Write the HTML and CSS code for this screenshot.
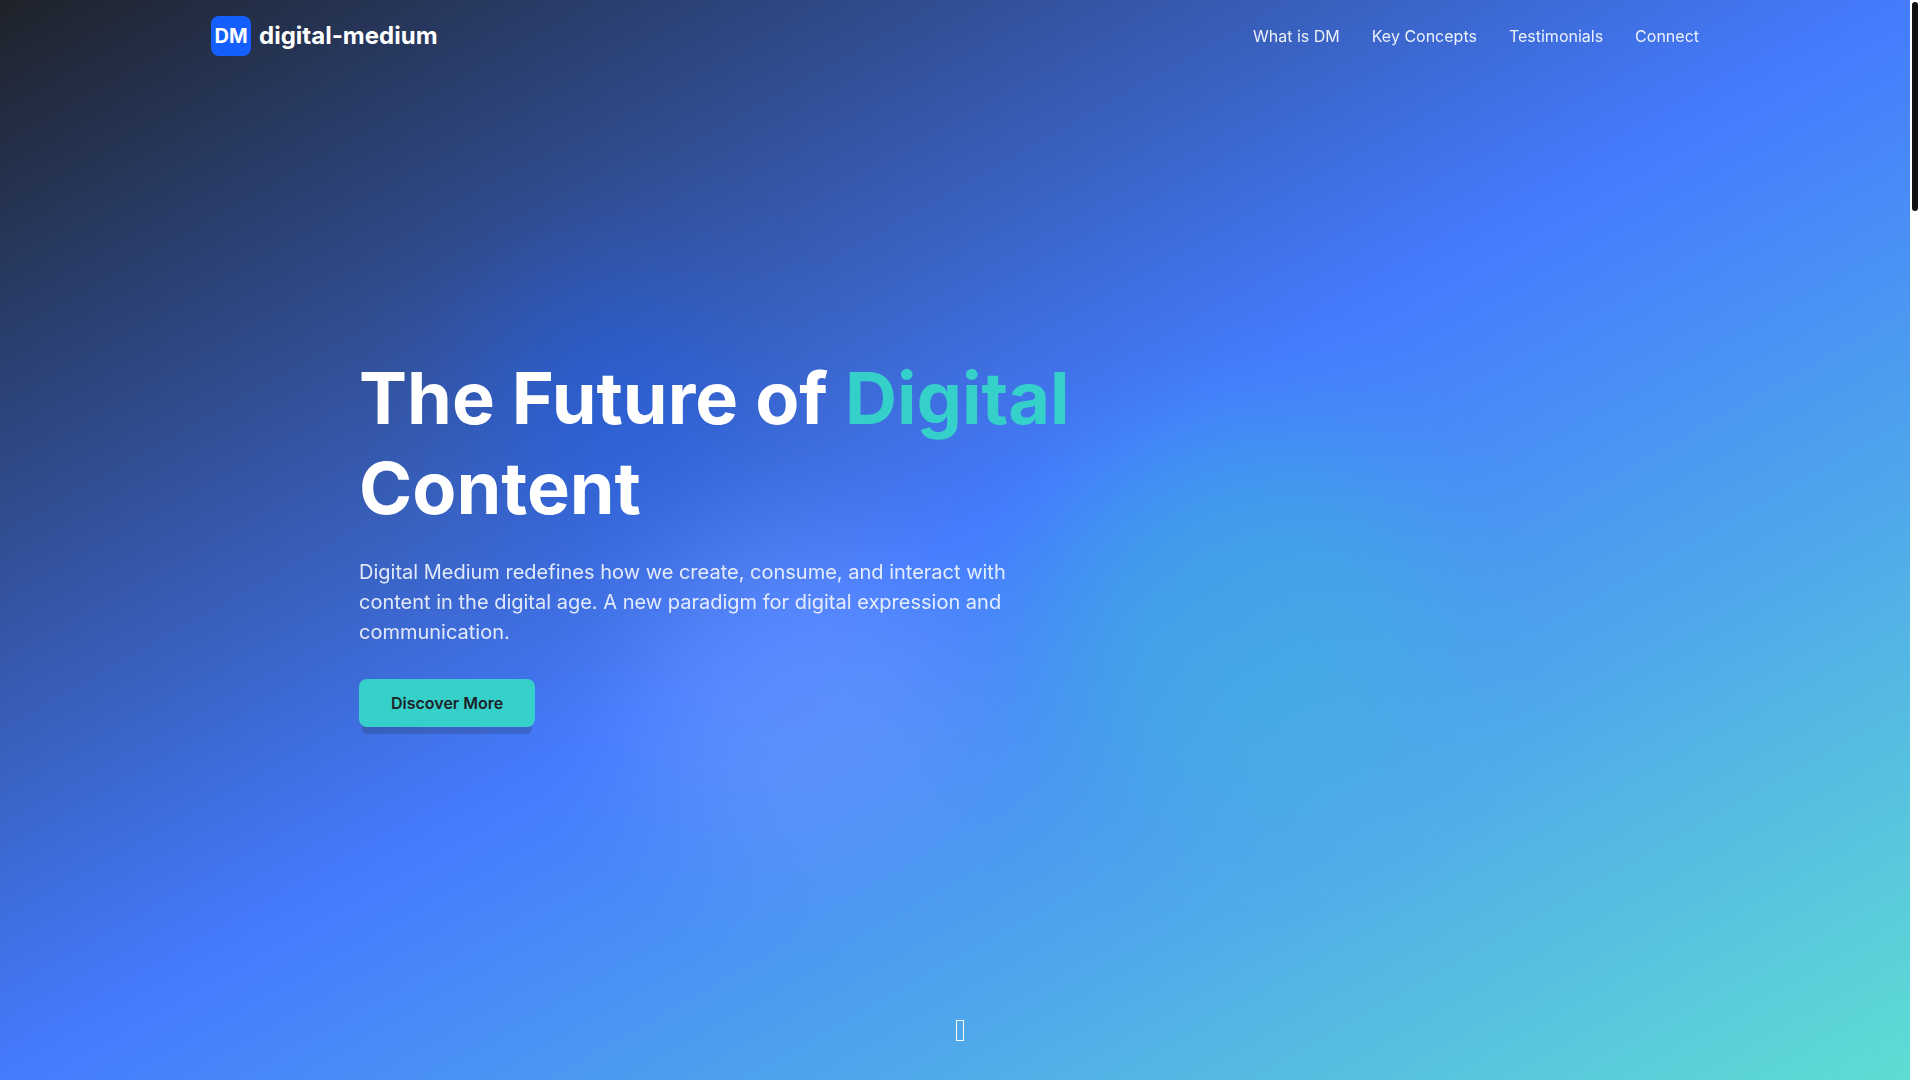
FILE: index.html
```html
<!DOCTYPE html>
<html lang="en">

<head>
    <meta charset="utf-8">
    <title>digital-medium</title>
    <meta name="viewport" content="width=device-width, initial-scale=1">
    <link rel="stylesheet" href="styles.css">
</head>

<body>
    <div class="page">
        <div class="blobs" aria-hidden="true">
            <div class="blob blob-blue"></div>
            <div class="blob blob-teal"></div>
            <div class="blob blob-light"></div>
        </div>

        <header class="header">
            <div class="container header-inner">
                <a href="#home" class="logo">
                    <span class="logo-mark">DM</span>
                    <span class="logo-name">digital-medium</span>
                </a>
                <nav class="nav">
                    <a href="#what">What is DM</a>
                    <a href="#concepts">Key Concepts</a>
                    <a href="#testimonials">Testimonials</a>
                    <a href="#connect">Connect</a>
                </nav>
            </div>
        </header>

        <main class="hero container" id="home">
            <div class="hero-content">
                <h1>The Future of <span class="accent">Digital</span> Content</h1>
                <p>Digital Medium redefines how we create, consume, and interact with content in the digital age. A new paradigm for digital expression and communication.</p>
                <button type="button" class="btn">Discover More</button>
            </div>
        </main>

        <a href="#what" class="scroll-down" aria-label="Scroll down"><span class="scroll-glyph"></span></a>
    </div>

    <div class="scrollbar" aria-hidden="true">
        <div class="scrollbar-thumb"></div>
    </div>
</body>

</html>
```

FILE: styles.css
```css
* {
    box-sizing: border-box;
}

body {
    margin: 0;
    display: flex;
    min-height: 100vh;
    font-family: Inter, "Liberation Sans", sans-serif;
    font-size: 16px;
    line-height: 24px;
    color: white;
    background-color: white;
}

a {
    color: inherit;
    text-decoration: none;
}

.page {
    flex: 1;
    display: flex;
    flex-direction: column;
    position: relative;
    overflow: hidden;
    background: linear-gradient(to bottom right, #1e2229, #447bff, #5eddd3);
}

.container {
    width: 100%;
    max-width: 1536px;
    margin: 0 auto;
    padding: 0 24px;
}

/* blurred circles behind the text */
.blobs {
    position: absolute;
    inset: 0;
    opacity: 0.3;
}

.blob {
    position: absolute;
    border-radius: 50%;
    filter: blur(64px);
}

.blob-blue {
    top: 25%;
    left: 25%;
    width: 256px;
    height: 256px;
    background-color: #155fff;
}

.blob-teal {
    bottom: 25%;
    right: 25%;
    width: 384px;
    height: 384px;
    background-color: #36d0ca;
}

.blob-light {
    top: 50%;
    left: 33.33%;
    width: 320px;
    height: 320px;
    background-color: #8aaaff;
}

.header {
    position: absolute;
    top: 0;
    left: 0;
    right: 0;
    padding: 16px 0;
}

.header-inner {
    display: flex;
    justify-content: space-between;
    align-items: center;
}

.logo {
    display: flex;
    align-items: center;
    gap: 8px;
    font-weight: 700;
}

.logo-mark {
    display: flex;
    align-items: center;
    justify-content: center;
    width: 40px;
    height: 40px;
    border-radius: 8px;
    background-color: #155fff;
    font-size: 20px;
}

.logo-name {
    font-size: 24px;
    line-height: 32px;
}

.nav {
    display: flex;
    gap: 32px;
}

.nav a {
    opacity: 0.9;
}

.hero {
    flex: 1;
    display: flex;
    align-items: center;
    justify-content: center;
    position: relative;
}

.hero-content {
    width: 100%;
    max-width: 1192px;
}

h1 {
    margin: 0 0 24px;
    max-width: 896px;
    font-size: 72px;
    line-height: 90px;
    font-weight: 700;
}

.accent {
    color: #36d0ca;
}

.hero-content p {
    margin: 0 0 32px;
    max-width: 672px;
    font-size: 20px;
    line-height: 30px;
    opacity: 0.85;
}

.btn {
    display: block;
    padding: 12px 32px;
    border: 0;
    border-radius: 8px;
    background-color: #36d0ca;
    color: #1e2229;
    font: inherit;
    font-weight: 600;
    box-shadow: 0 10px 0 -3px rgba(30, 34, 41, 0.2);
    cursor: pointer;
}

.scroll-down {
    position: absolute;
    bottom: 32px;
    left: 50%;
    padding: 7px 1px;
}

.scroll-glyph {
    display: block;
    width: 8px;
    height: 21px;
    border: 1px solid white;
}

.scrollbar {
    width: 10px;
    padding: 2px;
    background-color: white;
}

.scrollbar-thumb {
    width: 6px;
    height: 209px;
    border-radius: 3px;
    background-color: #111;
}
```
